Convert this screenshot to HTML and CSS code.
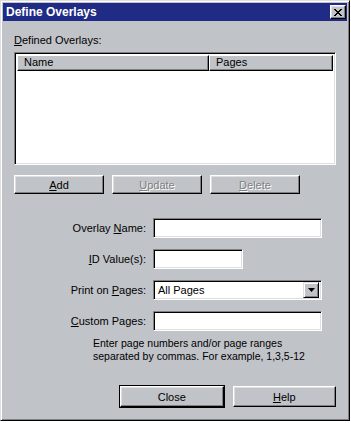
FILE: index.html
```html
<!DOCTYPE html>
<html lang="en">
<head>
    <meta charset="UTF-8">
    <title>Define Overlays</title>
    <link rel="stylesheet" href="styles.css">
</head>
<body>
	<div class="window">
		<div class="titlebar">
			<span class="title">Define Overlays</span>
			<span class="close-x">
				<svg width="8" height="7" viewBox="0 0 8 7"><path d="M0 0h2v1h1v1h2v-1h1v-1h2v1h-1v1h-1v1h-1v1h1v1h1v1h1v1h-2v-1h-1v-1h-2v1h-1v1h-2v-1h1v-1h1v-1h1v-1h-1v-1h-1v-1h-1z" fill="#000"/></svg>
			</span>
		</div>
		<div class="content">
			<div class="label-top"><u>D</u>efined Overlays:</div>
			<div class="listbox">
				<div class="list-head">
					<div class="col col-name">Name</div>
					<div class="col col-pages">Pages</div>
				</div>
			</div>
			<div class="btn-row">
				<div class="btn"><u>A</u>dd</div>
				<div class="btn disabled"><u>U</u>pdate</div>
				<div class="btn disabled"><u>D</u>elete</div>
			</div>

			<div class="form">
				<div class="row">
					<label>Overlay <u>N</u>ame:</label>
					<div class="field wide"></div>
				</div>
				<div class="row">
					<label><u>I</u>D Value(s):</label>
					<div class="field short"></div>
				</div>
				<div class="row">
					<label>Print on <u>P</u>ages:</label>
					<div class="field wide combo">
						<span class="combo-text">All Pages</span>
						<span class="drop">
							<svg width="7" height="4" viewBox="0 0 7 4"><path d="M0 0h7l-3.5 4z" fill="#000"/></svg>
						</span>
					</div>
				</div>
				<div class="row">
					<label><u>C</u>ustom Pages:</label>
					<div class="field wide"></div>
				</div>
			</div>
			<p class="hint">Enter page numbers and/or page ranges<br>separated by commas. For example, 1,3,5-12</p>

			<div class="footer">
				<div class="btn big default">Close</div>
				<div class="btn big"><u>H</u>elp</div>
			</div>
		</div>
	</div>
</body>
</html>
```

FILE: styles.css
```css
body{
	margin: 0;
	background: #fff;
	font-family: "Liberation Sans", Arial, sans-serif;
	font-size: 11px;
	color: #000;
}
u{
	text-decoration: underline;
	text-underline-offset: 1px;
}
.window{
	width: 350px;
	height: 421px;
	box-sizing: border-box;
	background: #c0c3c8;
	border: 1px solid;
	border-color: #dfdfdf #000 #000 #dfdfdf;
	box-shadow: inset 1px 1px #fff, inset -1px -1px #808080;
	padding: 2px;
}
.titlebar{
	height: 18px;
	background: #1f2b84;
	display: flex;
	align-items: center;
	justify-content: space-between;
	padding: 0 1px 0 3px;
}
.title{
	color: #fff;
	font-weight: bold;
	font-size: 12px;
}
.close-x{
	width: 16px;
	height: 14px;
	box-sizing: border-box;
	background: #c0c3c8;
	border: 1px solid;
	border-color: #fff #000 #000 #fff;
	box-shadow: inset -1px -1px #808080, inset 1px 1px #dfdfdf;
	display: flex;
	align-items: center;
	justify-content: center;
}
.content{
	padding: 0 11px;
}
.label-top{
	margin-top: 13px;
	line-height: 13px;
}
.listbox{
	margin-top: 5px;
	height: 113px;
	box-sizing: border-box;
	background: #fff;
	border: 1px solid;
	border-color: #808080 #fff #fff #808080;
	box-shadow: inset 1px 1px #000, inset -1px -1px #dfdfdf;
	padding: 2px;
}
.list-head{
	display: flex;
	height: 16px;
}
.col{
	box-sizing: border-box;
	background: #c0c3c8;
	border: 1px solid;
	border-color: #fff #000 #000 #fff;
	box-shadow: inset -1px -1px #808080;
	padding-left: 6px;
	line-height: 13px;
}
.col-name{
	width: 192px;
}
.col-pages{
	flex: 1;
}
.btn-row{
	display: flex;
	gap: 8px;
	margin-top: 10px;
}
.btn{
	width: 90px;
	height: 19px;
	box-sizing: border-box;
	border: 1px solid;
	border-color: #fff #000 #000 #fff;
	box-shadow: inset -1px -1px #808080, inset 1px 1px #dfdfdf;
	display: flex;
	align-items: center;
	justify-content: center;
}
.btn.disabled{
	color: #808080;
	text-shadow: 1px 1px #fff;
}
.form{
	margin-top: 24px;
	display: flex;
	flex-direction: column;
	gap: 11px;
}
.row{
	display: flex;
	align-items: center;
}
.row label{
	width: 132px;
	text-align: right;
	margin-right: 7px;
}
.field{
	height: 20px;
	box-sizing: border-box;
	background: #fff;
	border: 1px solid;
	border-color: #808080 #fff #fff #808080;
	box-shadow: inset 1px 1px #000, inset -1px -1px #dfdfdf;
}
.wide{
	width: 169px;
}
.short{
	width: 90px;
}
.combo{
	display: flex;
	align-items: center;
	justify-content: space-between;
	padding: 2px;
}
.combo-text{
	padding-left: 2px;
}
.drop{
	width: 16px;
	height: 16px;
	box-sizing: border-box;
	background: #c0c3c8;
	border: 1px solid;
	border-color: #dfdfdf #000 #000 #dfdfdf;
	box-shadow: inset 1px 1px #fff, inset -1px -1px #808080;
	display: flex;
	align-items: center;
	justify-content: center;
}
.hint{
	margin: 6px 0 0 79px;
	font-size: 10.5px;
	line-height: 13px;
}
.footer{
	display: flex;
	gap: 9px;
	margin-top: 23px;
	padding-left: 106px;
}
.btn.big{
	width: 105px;
	height: 21px;
}
.btn.default{
	outline: 1px solid #000;
	outline-offset: 0;
	border-color: #fff #000 #000 #fff;
}
```
